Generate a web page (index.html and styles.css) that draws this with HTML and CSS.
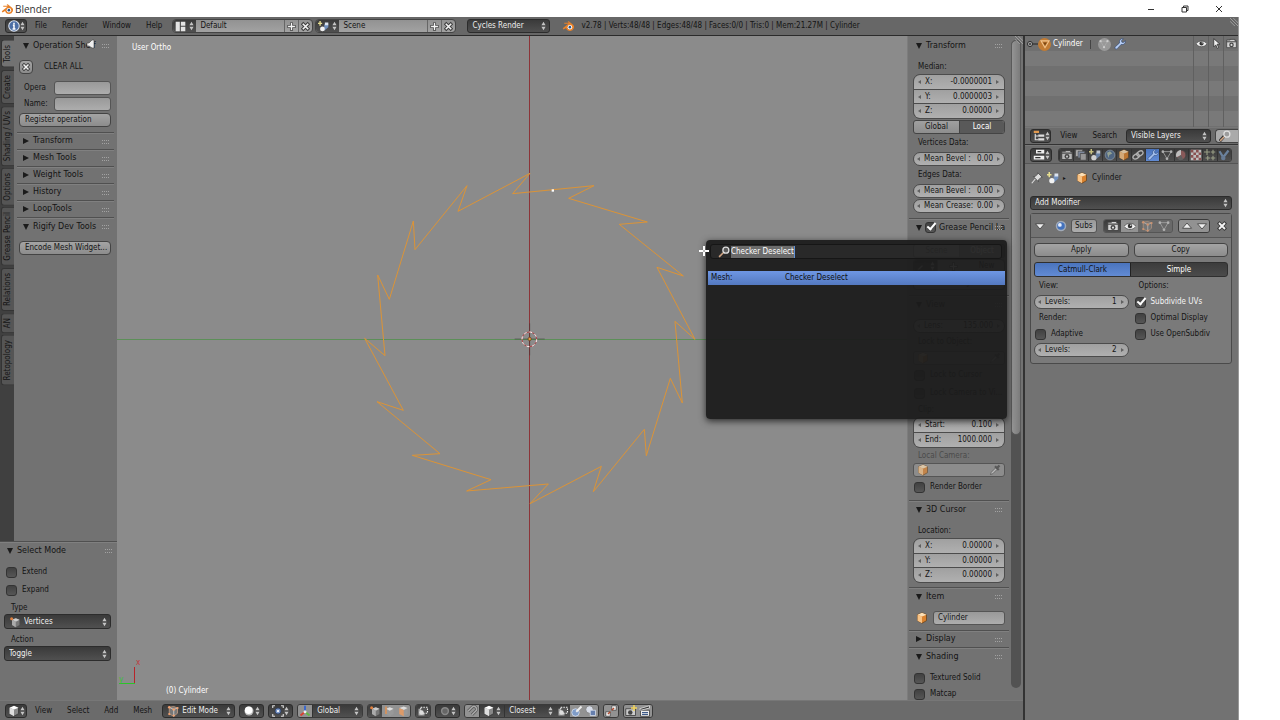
FILE: index.html
```html
<!DOCTYPE html>
<html lang="en">
<head>
<meta charset="utf-8">
<title>Blender</title>
<link rel="stylesheet" href="styles.css">
</head>
<body>
<svg class="defs" aria-hidden="true">
  <symbol id="ud" viewBox="0 0 6 12"><path d="M3 1 5.500 5H.5zM3 11 .5 7h5z" fill="#c4c4c4"/></symbol>
  <symbol id="blender" viewBox="0 0 16 16"><path d="M1 11 8.500 5H3V3.500h6L7.500 2 9 1.500l5 4a5 5 0 0 1-3 9c-3 0-5-1.500-5.500-4L2 12.500z" fill="#e8822a"/><circle cx="10.500" cy="9.500" r="3" fill="#fff"/><circle cx="10.500" cy="9.500" r="1.700" fill="#28568e"/></symbol>
  <symbol id="info" viewBox="0 0 16 16"><circle cx="8" cy="8" r="7" fill="#4c6ea5" stroke="#dde4f0" stroke-width="1.400"/><path d="M8 3.500v2M6.500 7H8v5M6 12h4" stroke="#fff" stroke-width="2" fill="none"/></symbol>
  <symbol id="layout" viewBox="0 0 16 16"><path d="M1 1h6v14H1zM8.500 1H15v6H8.500zM8.500 8.500H15V15H8.500z" fill="#e4e4e4"/></symbol>
  <symbol id="scene" viewBox="0 0 16 16"><path d="M3 0v7M0 3.500h6" stroke="#e8df90" stroke-width="2"/><path d="M9 5h6v4l-6 5z" fill="#7190bd"/><circle cx="6.500" cy="11.500" r="3.500" fill="#f2f2f2"/><path d="M10 2h5v4h-5z" fill="#dce4f0"/></symbol>
  <symbol id="plus" viewBox="0 0 16 16"><path d="M8 2v12M2 8h12" stroke="#444" stroke-width="4.500"/><path d="M8 3v10M3 8h10" stroke="#f4f4f4" stroke-width="2"/></symbol>
  <symbol id="x" viewBox="0 0 16 16"><path d="M3 3l10 10M13 3 3 13" stroke="#3b3b3b" stroke-width="5"/><path d="M4 4l8 8M12 4l-8 8" stroke="#f4f4f4" stroke-width="2.400"/></symbol>
  <symbol id="cube" viewBox="0 0 16 16"><path d="M8 1l6 2.500v8L8 15l-6-3.500v-8z" fill="#d9822f" stroke="#60401f"/><path d="M8 1l6 2.500L8 6 2 3.500z" fill="#fbe0b8"/><path d="M2 3.500 8 6v9l-6-3.500z" fill="#f8c386"/></symbol>
  <symbol id="wcube" viewBox="0 0 16 16"><path d="M8 1l6 2.500v8L8 15l-6-3.500v-8z" fill="#888" stroke="#333"/><path d="M8 1l6 2.500L8 6 2 3.500z" fill="#fff"/><path d="M2 3.500 8 6v9l-6-3.500z" fill="#ddd"/></symbol>
  <symbol id="vert" viewBox="0 0 16 16"><path d="M9 3l5 2v7l-5 3-5-3V5z" fill="#777"/><path d="M9 3l5 2-5 2.500L4 5z" fill="#ccc"/><path d="M4 5l5 2.500V15l-5-3z" fill="#aaa"/><circle cx="3.500" cy="3.500" r="2" fill="#e08040"/></symbol>
  <symbol id="edge" viewBox="0 0 16 16"><path d="M9 3l5 2v7l-5 3-5-3V5z" fill="#999"/><path d="M9 3l5 2-5 2.500L4 5z" fill="#ddd"/><path d="M4 2v10" stroke="#e09050" stroke-width="2"/></symbol>
  <symbol id="face" viewBox="0 0 16 16"><path d="M9 2l5 2v8l-5 3-6-3V4z" fill="#999"/><path d="M9 2l5 2-5 2.500L3 4z" fill="#ddd"/><path d="M3 4l6 2.500V15l-6-3z" fill="#dd9a68"/></symbol>
  <symbol id="editmode" viewBox="0 0 16 16"><path d="M3 3l6-1 5 2v7l-5 4-6-3z" fill="#777" stroke="#c9a286"/><path d="M3 3l6 3 5-2M9 6v9" stroke="#ddd" fill="none"/><g fill="#f0a070"><circle cx="3" cy="3" r="1.700"/><circle cx="9" cy="6" r="1.700"/><circle cx="14" cy="4" r="1.500"/><circle cx="3" cy="12" r="1.500"/><circle cx="9" cy="14" r="1.500"/></g></symbol>
  <symbol id="ball" viewBox="0 0 16 16"><circle cx="8" cy="8" r="6" fill="#bbb"/><circle cx="7.500" cy="7" r="5" fill="#fff"/></symbol>
  <symbol id="pivot" viewBox="0 0 16 16"><path d="M1 4V1h3M12 1h3v3M15 12v3h-3M4 15H1v-3" stroke="#ddd" stroke-width="1.500" fill="none"/><circle cx="8" cy="8" r="4" fill="#7894c4" stroke="#26375a"/><circle cx="8" cy="8" r="1.500" fill="#fff"/></symbol>
  <symbol id="axes" viewBox="0 0 16 16"><path d="M8 9V1" stroke="#3766d0" stroke-width="2.500"/><path d="M8 9l-6 5" stroke="#d84030" stroke-width="2.500"/><path d="M8 9l6 5" stroke="#60b840" stroke-width="2.500"/><circle cx="8" cy="9" r="2" fill="#eee"/></symbol>
  <symbol id="occl" viewBox="0 0 16 16"><path d="M2 5h8v9H2z" fill="#aaa"/><path d="M5 3h9v8H5z" fill="#555" stroke="#eee" stroke-dasharray="2 1.500" stroke-width="1.500"/><circle cx="6" cy="10" r="3" fill="#ddd"/></symbol>
  <symbol id="ring" viewBox="0 0 16 16"><circle cx="8" cy="8" r="4.500" fill="#666" stroke="#888" stroke-width="2"/></symbol>
  <symbol id="magnet" viewBox="0 0 16 16"><path d="M3 8l5-5a3.500 3.500 0 0 1 5 5l-5 5" stroke="#555" stroke-width="4" fill="none"/><path d="M3 8l5-5a3.500 3.500 0 0 1 5 5l-5 5" stroke="#aaa" stroke-width="2" fill="none"/></symbol>
  <symbol id="snapball" viewBox="0 0 16 16"><circle cx="6" cy="10" r="5" fill="#7f9cc8" stroke="#dde4f0"/><path d="M7 9l7-7" stroke="#eee" stroke-width="2.500"/></symbol>
  <symbol id="snapproj" viewBox="0 0 16 16"><circle cx="6" cy="6" r="5" fill="#d8dde8" stroke="#777"/><path d="M7 7h7v7H7z" fill="#667fae" stroke="#dce4f0"/></symbol>
  <symbol id="automerge" viewBox="0 0 16 16"><path d="M9 1h6v6H9zM1 9h6v6H1z" fill="#eee" stroke="#444"/><path d="M9 7l3-3M7 9l-3 3" stroke="#b04a30" stroke-width="2"/></symbol>
  <symbol id="camera" viewBox="0 0 16 16"><path d="M1 3h5V2h7v2h2v10H1z" fill="#d4d4d4" stroke="#333"/><path d="M1 5.500h14" stroke="#444" stroke-width="1.500"/><circle cx="8" cy="10" r="3.300" fill="#444"/><circle cx="8" cy="10" r="1.500" fill="#ddd"/></symbol>
  <symbol id="camlight" viewBox="0 0 16 16"><path d="M1 5h13v9H1z" fill="#ccc" stroke="#333"/><circle cx="7" cy="10" r="3" fill="#444"/><path d="M12 0v8M8 4h8" stroke="#f2d45c" stroke-width="2"/></symbol>
  <symbol id="clap" viewBox="0 0 16 16"><path d="M2 7h12v8H2z" fill="#eee" stroke="#333"/><path d="M1 5l13-4v3L2 7z" fill="#333" stroke="#eee"/><path d="M4 10h8M4 12.500h8" stroke="#3d5a88" stroke-width="1.500"/></symbol>
  <symbol id="stack" viewBox="0 0 16 16"><path d="M1 1h9v9H1z" fill="#ddd" stroke="#555"/><path d="M4 3h9v9H4z" fill="#8e9cb5" stroke="#555"/><path d="M7 6h8v9H7z" fill="#aaa" stroke="#444"/></symbol>
  <symbol id="world" viewBox="0 0 16 16"><circle cx="8" cy="8" r="6.500" fill="#536f92" stroke="#9aabbd"/><path d="M4 5l4-2 3 3-4 2-1 4z" fill="#a9b9a6"/></symbol>
  <symbol id="link" viewBox="0 0 16 16"><g fill="none" stroke="#ccc" stroke-width="1.800"><ellipse cx="5.500" cy="10" rx="4.500" ry="3" transform="rotate(-30 5.500 10)"/><ellipse cx="10.500" cy="6" rx="4.500" ry="3" transform="rotate(-30 10.500 6)"/></g></symbol>
  <symbol id="wrench" viewBox="0 0 16 16"><path d="M1.500 12 7.500 6.500C6.500 3 9 .5 12.500 1L10 3.500 10.500 5.500 12.500 6 15 3.500C15.500 7 13 9.500 9.500 8.500L4 14.500A1.800 1.800 0 0 1 1.500 12z" fill="#b9d0f6" stroke="#27406b" stroke-width=".8"/></symbol>
  <symbol id="tri" viewBox="0 0 16 16"><path d="M2.500 3.500h11L8 13z" fill="none" stroke="#aaa" stroke-width="1.300"/><g fill="#ccc"><circle cx="2.500" cy="3.500" r="1.800"/><circle cx="13.500" cy="3.500" r="1.800"/><circle cx="8" cy="13" r="1.800"/></g></symbol>
  <symbol id="mesh" viewBox="0 0 16 16"><path d="M1.500 3h13L8 14z" fill="none" stroke="#f2c48c" stroke-width="1.700"/><path d="M5 5.500h6L8 10.500z" fill="#7a4613"/></symbol>
  <symbol id="mat" viewBox="0 0 16 16"><circle cx="8" cy="8" r="6.500" fill="#9a6060" stroke="#444"/><path d="M8 1.500A6.500 6.500 0 0 0 2 11l6-3z" fill="#ddd"/><path d="M8 8l-5 4a6 6 0 0 0 8 2z" fill="#666"/></symbol>
  <symbol id="check" viewBox="0 0 16 16"><path d="M1 1h14v14H1z" fill="#ddd"/><path d="M1 1h3.500v3.500H1zM8 1h3.500v3.500H8zM4.500 4.500H8V8H4.500zM11.500 4.500H15V8h-3.500zM1 8h3.500v3.500H1zM8 8h3.500v3.500H8zM4.500 11.500H8V15H4.500zM11.500 11.500H15V15h-3.500z" fill="#9d5656"/></symbol>
  <symbol id="parts" viewBox="0 0 16 16"><path d="M4 0v8M0 4h8M12 1v6M9 4h6M5 9v6M2 12h6M12 9v6M9 12h6" stroke="#aeb496" stroke-width="1.500"/></symbol>
  <symbol id="phys" viewBox="0 0 16 16"><path d="M2 3l5 8 7-9" stroke="#7592b5" stroke-width="3" fill="none"/><circle cx="7" cy="12" r="3" fill="#6e87a8"/></symbol>
  <symbol id="tree" viewBox="0 0 16 16"><path d="M1 1h7v3H1z" fill="#e0994f"/><path d="M3 5v8h4M3 8h4" stroke="#ddd" stroke-width="1.500" fill="none"/><path d="M7 6h8v3H7zM7 11h8v3H7z" fill="#ddd"/></symbol>
  <symbol id="props" viewBox="0 0 16 16"><path d="M4 1h11v5H4zM1 9h14v5H1z" fill="#f0f0f0"/><path d="M6 3.500h5M3 11.500h7" stroke="#333" stroke-width="1.500"/></symbol>
  <symbol id="pin" viewBox="0 0 16 16"><path d="M1 15l5-6" stroke="#ddd" stroke-width="1.500"/><path d="M9 1l6 6-2 .5-3 3V13L3 6h2.500l3-3z" fill="#ddd" stroke="#444"/></symbol>
  <symbol id="eye" viewBox="0 0 16 16"><path d="M0 8.500C4 3 12 3 16 8.500 12 14 4 14 0 8.500z" fill="#f0f0f0" stroke="#444"/><circle cx="8" cy="8" r="3" fill="#333"/><circle cx="9" cy="7" r="1" fill="#eee"/></symbol>
  <symbol id="arrow" viewBox="0 0 16 16"><path d="M4 1v12l3-3 2 5 2-1-2-5h4z" fill="#f0f0f0" stroke="#222"/></symbol>
  <symbol id="mag" viewBox="0 0 16 16"><path d="M1 15l6-7" stroke="#333" stroke-width="4"/><path d="M1.500 14.500 7 9" stroke="#d2a583" stroke-width="2"/><circle cx="10.500" cy="5.500" r="4" fill="#8b8b8b" fill-opacity=".5" stroke="#e0e0e0" stroke-width="1.700"/></symbol>
  <symbol id="subs" viewBox="0 0 16 16"><circle cx="8" cy="8" r="7" fill="#c7d7ee" opacity=".55"/><circle cx="8" cy="8" r="5" fill="#4372bd"/><circle cx="6.500" cy="6.500" r="2.500" fill="#e6efff"/></symbol>
  <symbol id="up" viewBox="0 0 16 16"><path d="M8 4l6 7H2z" fill="#eee" stroke="#333"/></symbol>
  <symbol id="down" viewBox="0 0 16 16"><path d="M8 12 2 5h12z" fill="#eee" stroke="#333"/></symbol>
  <symbol id="drop" viewBox="0 0 16 16"><path d="M2 14l1-3 6-6 2 2-6 6z" fill="#ccc" stroke="#444"/><path d="M8 3l5 5M11 5l3-3" stroke="#444" stroke-width="3"/></symbol>
  <symbol id="grip" viewBox="0 0 10 6"><path d="M1 1.500h8M1 4.500h8" stroke="#a2a2a2" stroke-dasharray="1 1"/></symbol>
  <symbol id="corner" viewBox="0 0 10 10"><path d="M0 0l10 10M4 0l6 6M0 4l6 6" stroke="#aaa"/></symbol>
</svg>

<header class="titlebar">
  <svg class="i"><use href="#blender"/></svg><span>Blender</span>
  <div class="winbtns">
    <button aria-label="Minimize"><svg viewBox="0 0 8 8"><path d="M1 4.500h6"/></svg></button>
    <button aria-label="Restore"><svg viewBox="0 0 8 8"><path d="M1 2.500h4.500V7H1zM2.500 2.500V1H7v4.500H5.500"/></svg></button>
    <button aria-label="Close"><svg viewBox="0 0 8 8"><path d="M1 1l6 6M7 1 1 7"/></svg></button>
  </div>
</header>

<div class="app">
<nav class="info">
  <button class="dd" aria-label="Editor type"><svg class="i"><use href="#info"/></svg><svg class="ud"><use href="#ud"/></svg></button>
  <div class="menus"><button>File</button><button>Render</button><button>Window</button><button>Help</button></div>
  <div class="block">
    <button class="dd" aria-label="Screen layout"><svg class="i"><use href="#layout"/></svg><svg class="ud"><use href="#ud"/></svg></button>
    <input aria-label="Layout name" value="Default">
    <button aria-label="Add layout"><svg class="i"><use href="#plus"/></svg></button><button aria-label="Delete layout"><svg class="i"><use href="#x"/></svg></button>
  </div>
  <div class="block">
    <button class="dd" aria-label="Scene"><svg class="i"><use href="#scene"/></svg><svg class="ud"><use href="#ud"/></svg></button>
    <input aria-label="Scene name" value="Scene">
    <button aria-label="Add scene"><svg class="i"><use href="#plus"/></svg></button><button aria-label="Delete scene"><svg class="i"><use href="#x"/></svg></button>
  </div>
  <span class="sel engine"><select aria-label="Render engine"><option>Cycles Render</option></select><svg class="ud"><use href="#ud"/></svg></span>
  <svg class="i logo"><use href="#blender"/></svg>
  <span class="stats">v2.78 | Verts:48/48 | Edges:48/48 | Faces:0/0 | Tris:0 | Mem:21.27M | Cylinder</span>
  <svg class="corner infomark"><use href="#corner"/></svg>
</nav>

<main class="work">
<section class="view3d">
  <div class="regions">
    <aside class="left">
      <div class="tools">
        <div class="tabs"><button class="on">Tools</button><button>Create</button><button>Shading / UVs</button><button>Options</button><button>Grease Pencil</button><button>Relations</button><button>AN</button><button>Retopology</button></div>
        <div class="panels">
          <section class="panel shelf"><h2 class="open">Operation Shelf<svg class="grip"><use href="#grip"/></svg></h2>
            <div class="body">
              <div class="line clear"><button class="btn sq" aria-label="Clear"><svg class="i"><use href="#x"/></svg></button><span>CLEAR ALL</span></div>
              <label class="line field"><span>Opera</span><input class="text"></label>
              <label class="line field"><span>Name:</span><input class="text"></label>
              <button class="btn start">Register operation</button>
            </div></section>
          <section class="panel"><h2>Transform<svg class="grip"><use href="#grip"/></svg></h2></section>
          <section class="panel"><h2>Mesh Tools<svg class="grip"><use href="#grip"/></svg></h2></section>
          <section class="panel"><h2>Weight Tools<svg class="grip"><use href="#grip"/></svg></h2></section>
          <section class="panel"><h2>History<svg class="grip"><use href="#grip"/></svg></h2></section>
          <section class="panel"><h2>LoopTools<svg class="grip"><use href="#grip"/></svg></h2></section>
          <section class="panel"><h2 class="open">Rigify Dev Tools<svg class="grip"><use href="#grip"/></svg></h2>
            <div class="body"><button class="btn start">Encode Mesh Widget...</button></div></section>
        </div>
      </div>
      <section class="panel operator"><h2 class="open">Select Mode<svg class="grip"><use href="#grip"/></svg></h2>
        <div class="body">
          <label class="cb"><input type="checkbox">Extend</label>
          <label class="cb"><input type="checkbox">Expand</label>
          <label class="lab" for="type">Type</label>
          <span class="sel"><svg class="i"><use href="#vert"/></svg><select id="type"><option>Vertices</option></select><svg class="ud"><use href="#ud"/></svg></span>
          <label class="lab" for="action">Action</label>
          <span class="sel"><select id="action"><option>Toggle</option></select><svg class="ud"><use href="#ud"/></svg></span>
        </div></section>
    </aside>

    <div class="viewport">
      <svg class="canvas">
        <path d="M0 303.500H2000" stroke="#5c8f58"/><path d="M412.500 0V2000" stroke="#8c3438"/>
        <g transform="translate(233 124) scale(.333333)">
          <path d="M540 40 488 101 732 77 656 115 892 186 808 193 1000 348 921 322 1035 538 975 484 997 729 961 655 889 887 883 808 730 995 754 919 540 1031 595 972 350 993 423 959 187 886 270 881 81 725 160 751 44 535 105 587 83 345 118 418 190 183 195 269 351 77 324 154z" fill="none" stroke="#dc9436" stroke-width="3"/>
          <path d="M605 88h7v7h-7z" fill="#fff"/>
          <path d="M494 537h90M539 490v96" stroke="#333" stroke-width="2" opacity=".7"/>
          <circle cx="538" cy="538" r="22" fill="none" stroke="#b34346" stroke-width="3"/>
          <circle cx="538" cy="538" r="22" fill="none" stroke="#fff" stroke-width="3" stroke-dasharray="8.600 8.600"/>
          <circle cx="539" cy="537" r="5" fill="#e79a3b" stroke="#5a3a1a" stroke-width="2"/>
        </g>
        <path d="M17.500 631v16" stroke="#b8242a"/><path d="M2 647.500h16" stroke="#2bc428"/>
        <text x="19" y="629" fill="#c03a3e">x</text><text x="2" y="646" fill="#36c034">y</text>
      </svg>
      <span class="ortho">User Ortho</span><span class="objname">(0) Cylinder</span>
    </div>

    <aside class="npanel">
      <div class="scroll">
      <section class="panel"><h2 class="open">Transform<svg class="grip"><use href="#grip"/></svg></h2>
        <div class="body">
          <span class="lab">Median:</span>
          <div class="group"><label class="num">X:<input value="-0.0000001"></label><label class="num">Y:<input value="0.0000003"></label><label class="num">Z:<input value="0.00000"></label></div>
          <div class="toggle light"><button>Global</button><button class="on">Local</button></div>
          <span class="lab">Vertices Data:</span>
          <label class="num">Mean Bevel :<input value="0.00"></label>
          <span class="lab">Edges Data:</span>
          <label class="num">Mean Bevel :<input value="0.00"></label>
          <label class="num">Mean Crease:<input value="0.00"></label>
        </div></section>
      <section class="panel grease"><h2 class="open"><input type="checkbox" checked aria-label="Grease Pencil Layers">Grease Pencil La<svg class="grip"><use href="#grip"/></svg></h2>
        <div class="body">
          <div class="toggle light"><button>Scene</button><button class="on">Object</button></div>
          <div class="block"><button class="dd" aria-label="Grease pencil data"><svg class="i"><use href="#drop"/></svg><svg class="ud"><use href="#ud"/></svg></button><button class="new"><svg class="i"><use href="#plus"/></svg>New</button></div>
          <button class="btn">New Layer</button>
        </div></section>
      <section class="panel"><h2 class="open">View<svg class="grip"><use href="#grip"/></svg></h2>
        <div class="body">
          <label class="num">Lens:<input value="135.000"></label>
          <label class="lab" for="lockobj">Lock to Object:</label>
          <span class="obj faded"><svg class="i"><use href="#cube"/></svg><input id="lockobj"><svg class="i"><use href="#drop"/></svg></span>
          <label class="cb"><input type="checkbox">Lock to Cursor</label>
          <label class="cb"><input type="checkbox">Lock Camera to Vi...</label>
          <span class="lab">Clip:</span>
          <div class="group"><label class="num">Start:<input value="0.100"></label><label class="num">End:<input value="1000.000"></label></div>
          <label class="lab dim" for="loccam">Local Camera:</label>
          <span class="obj faded"><svg class="i"><use href="#cube"/></svg><input id="loccam"><svg class="i"><use href="#drop"/></svg></span>
          <label class="cb"><input type="checkbox">Render Border</label>
        </div></section>
      <section class="panel"><h2 class="open">3D Cursor<svg class="grip"><use href="#grip"/></svg></h2>
        <div class="body">
          <span class="lab">Location:</span>
          <div class="group"><label class="num">X:<input value="0.00000"></label><label class="num">Y:<input value="0.00000"></label><label class="num">Z:<input value="0.00000"></label></div>
        </div></section>
      <section class="panel"><h2 class="open">Item<svg class="grip"><use href="#grip"/></svg></h2>
        <div class="body"><div class="line item"><svg class="i"><use href="#cube"/></svg><input class="text" aria-label="Object name" value="Cylinder"></div></div></section>
      <section class="panel"><h2>Display<svg class="grip"><use href="#grip"/></svg></h2></section>
      <section class="panel shading"><h2 class="open">Shading<svg class="grip"><use href="#grip"/></svg></h2>
        <div class="body"><label class="cb"><input type="checkbox">Textured Solid</label><label class="cb"><input type="checkbox">Matcap</label></div></section>
      </div>
      <div class="bar"><i></i></div>
    </aside>
    <svg class="corner top"><use href="#corner"/></svg>
  </div>

  <nav class="viewhead">
    <button class="dd" aria-label="Editor type"><svg class="i"><use href="#wcube"/></svg><svg class="ud"><use href="#ud"/></svg></button>
    <div class="menus"><button>View</button><button>Select</button><button>Add</button><button>Mesh</button></div>
    <span class="sel mode"><svg class="i"><use href="#editmode"/></svg><select aria-label="Mode"><option>Edit Mode</option></select><svg class="ud"><use href="#ud"/></svg></span>
    <button class="dd wide" aria-label="Viewport shading"><svg class="i"><use href="#ball"/></svg><svg class="ud"><use href="#ud"/></svg></button>
    <button class="dd wide" aria-label="Pivot point"><svg class="i"><use href="#pivot"/></svg><svg class="ud"><use href="#ud"/></svg></button>
    <div class="strip"><button class="on" aria-label="Manipulator"><svg class="i"><use href="#axes"/></svg></button><span class="sel orient"><select aria-label="Orientation"><option>Global</option></select><svg class="ud"><use href="#ud"/></svg></span></div>
    <div class="strip"><button aria-label="Vertex select"><svg class="i"><use href="#vert"/></svg></button><button class="on" aria-label="Edge select"><svg class="i"><use href="#edge"/></svg></button><button class="on" aria-label="Face select"><svg class="i"><use href="#face"/></svg></button></div>
    <div class="strip"><button aria-label="Limit selection"><svg class="i"><use href="#occl"/></svg></button></div>
    <button class="dd wide" aria-label="Proportional editing"><svg class="i"><use href="#ring"/></svg><svg class="ud"><use href="#ud"/></svg></button>
    <div class="strip snap"><button class="on" aria-label="Snap"><svg class="i"><use href="#magnet"/></svg></button><button class="dd wide" aria-label="Snap element"><svg class="i"><use href="#wcube"/></svg><svg class="ud"><use href="#ud"/></svg></button><span class="sel orient"><select aria-label="Snap target"><option>Closest</option></select><svg class="ud"><use href="#ud"/></svg></span><button aria-label="Snap self"><svg class="i"><use href="#occl"/></svg></button><button class="on" aria-label="Align rotation"><svg class="i"><use href="#snapball"/></svg></button><button class="on" aria-label="Project"><svg class="i"><use href="#snapproj"/></svg></button></div>
    <div class="strip"><button class="on" aria-label="Auto merge"><svg class="i"><use href="#automerge"/></svg></button></div>
    <div class="strip"><button class="on" aria-label="Render image"><svg class="i"><use href="#camlight"/></svg></button><button class="on" aria-label="Render animation"><svg class="i"><use href="#clap"/></svg></button></div>
  </nav>

  <svg class="crosshair" viewBox="0 0 12 12"><path d="M6 1v10M1 6h10" stroke="#fff" stroke-width="2"/><path d="M6 5v2" stroke="#777"/></svg>
  <svg class="shelfmark" viewBox="0 0 10 10"><path d="M1 4h2l3-3h2v8H6L3 7H1z" fill="#eee" stroke="#444" stroke-width=".6"/></svg>
  <div class="popup" role="dialog" aria-label="Search">
    <div class="query"><svg class="i"><use href="#mag"/></svg><input aria-label="Search" value="Checker Deselect"></div>
    <button class="hit"><span>Mesh:</span><span>Checker Deselect</span></button>
  </div>
</section>

<section class="side">
  <div class="outliner">
    <div class="node"><svg class="expand" viewBox="0 0 12 8"><circle cx="4" cy="4" r="2.500" fill="#ddd" stroke="#222"/><path d="M2.500 4h3M4 2.500v3M7 4h5" stroke="#222"/></svg>
      <span class="disc orange"><svg class="i"><use href="#mesh"/></svg></span><span class="name">Cylinder</span><span class="pipe"></span>
      <span class="disc"><svg class="i"><use href="#tri"/></svg></span><svg class="i"><use href="#wrench"/></svg></div>
    <div class="cols"><span><svg class="i"><use href="#eye"/></svg></span><span><svg class="i"><use href="#arrow"/></svg></span><span><svg class="i"><use href="#camera"/></svg></span></div>
  </div>
  <nav class="outhead">
    <button class="dd" aria-label="Editor type"><svg class="i"><use href="#tree"/></svg><svg class="ud"><use href="#ud"/></svg></button>
    <div class="menus"><button>View</button><button>Search</button></div>
    <span class="sel"><select aria-label="Display mode"><option>Visible Layers</option></select><svg class="ud"><use href="#ud"/></svg></span>
    <button class="find" aria-label="Search"><svg class="i"><use href="#mag"/></svg></button>
  </nav>
  <nav class="prophead">
    <button class="dd" aria-label="Editor type"><svg class="i"><use href="#props"/></svg><svg class="ud"><use href="#ud"/></svg></button>
    <div class="strip contexts">
      <button aria-label="Render"><svg class="i"><use href="#camera"/></svg></button><button aria-label="Render layers"><svg class="i"><use href="#stack"/></svg></button><button aria-label="Scene"><svg class="i"><use href="#scene"/></svg></button><button aria-label="World"><svg class="i"><use href="#world"/></svg></button><button aria-label="Object"><svg class="i"><use href="#cube"/></svg></button><button aria-label="Constraints"><svg class="i"><use href="#link"/></svg></button><button class="blue" aria-label="Modifiers"><svg class="i"><use href="#wrench"/></svg></button><button aria-label="Data"><svg class="i"><use href="#tri"/></svg></button><button aria-label="Material"><svg class="i"><use href="#mat"/></svg></button><button aria-label="Texture"><svg class="i"><use href="#check"/></svg></button><button aria-label="Particles"><svg class="i"><use href="#parts"/></svg></button><button aria-label="Physics"><svg class="i"><use href="#phys"/></svg></button>
    </div>
  </nav>
  <div class="properties">
    <div class="crumbs"><svg class="i"><use href="#pin"/></svg><svg class="i"><use href="#scene"/></svg><span class="sep">▸</span><svg class="i"><use href="#cube"/></svg><span>Cylinder</span></div>
    <span class="sel"><select aria-label="Add Modifier"><option>Add Modifier</option></select><svg class="ud"><use href="#ud"/></svg></span>
    <section class="modifier">
      <header>
        <button class="bare" aria-label="Collapse"><svg class="i"><use href="#down"/></svg></button>
        <svg class="i subs"><use href="#subs"/></svg>
        <input class="text" aria-label="Modifier name" value="Subs">
        <div class="strip flags"><button aria-label="Render"><svg class="i"><use href="#camera"/></svg></button><button class="on" aria-label="Viewport"><svg class="i"><use href="#eye"/></svg></button><button class="off" aria-label="Edit mode"><svg class="i"><use href="#editmode"/></svg></button><button class="off" aria-label="On cage"><svg class="i"><use href="#tri"/></svg></button></div>
        <div class="strip moves"><button class="on" aria-label="Move up"><svg class="i"><use href="#up"/></svg></button><button class="on" aria-label="Move down"><svg class="i"><use href="#down"/></svg></button></div>
        <button class="bare close" aria-label="Remove"><svg class="i"><use href="#x"/></svg></button>
      </header>
      <div class="mbody">
        <div class="pair"><button class="btn">Apply</button><button class="btn">Copy</button></div>
        <div class="toggle"><button class="blue">Catmull-Clark</button><button>Simple</button></div>
        <div class="pair">
          <div><span class="lab">View:</span><label class="num">Levels:<input value="1"></label><span class="lab">Render:</span><label class="cb"><input type="checkbox">Adaptive</label><label class="num">Levels:<input value="2"></label></div>
          <div><span class="lab">Options:</span><label class="cb lit"><input type="checkbox" checked>Subdivide UVs</label><label class="cb"><input type="checkbox">Optimal Display</label><label class="cb"><input type="checkbox">Use OpenSubdiv</label></div>
        </div>
      </div>
    </section>
  </div>
</section>
</main>
</div>
</body>
</html>
```

FILE: styles.css
```css
* { box-sizing: border-box; }
html, body { height: 100%; }
body {
  margin: 0;
  display: flex;
  flex-direction: column;
  background: #fff;
  color: #141414;
  font: 8px/14px "DejaVu Sans Condensed", "DejaVu Sans", sans-serif;
  overflow: hidden;
}
button, input, select { font: inherit; color: inherit; margin: 0; padding: 0; border: 0; background: none; min-width: 0; }
select { appearance: none; flex: 1; }
svg { flex: none; display: block; }
.defs { position: absolute; width: 0; height: 0; }
.i { width: 12px; height: 12px; }
.ud { width: 5px; height: 10px; }

/* window title */
.titlebar { flex: none; display: flex; align-items: center; gap: 2px; height: 17px; margin-right: 41px; padding: 0 3px 0 1px; font: 10px/16px "Open Sans", sans-serif; color: #333; }
.winbtns { display: flex; margin-left: auto; }
.winbtns button { width: 34px; display: grid; place-items: center; }
.winbtns svg { width: 8px; height: 8px; fill: none; stroke: #333; stroke-width: 1; }

.app { flex: 1; min-height: 0; display: flex; flex-direction: column; margin-right: 41px; background: #727272; border-right: 1px solid #999; }
.work { flex: 1; min-height: 0; display: grid; grid-template-columns: 1fr 215px; }

/* shared controls */
.dd, .sel, .strip button {
  display: flex; align-items: center; height: 14px;
  background: linear-gradient(#3a3a3a, #505050);
  color: #eee;
}
.dd, .sel { border: 1px solid #2c2c2c; border-radius: 3px; }
.dd { width: 22px; justify-content: space-between; padding: 0 2px; }
.dd.wide { width: 25px; padding: 0 3px; }
.sel { padding: 0 3px 0 4px; gap: 3px; }
.btn { display: block; width: 100%; height: 14px; margin: 1px 0; line-height: 12px; border: 1px solid #444; border-radius: 4px; background: linear-gradient(#a4a4a4, #8c8c8c); }
.btn.start { text-align: left; padding-left: 5px; white-space: nowrap; overflow: hidden; }
.btn.sq { width: 14px; display: grid; place-items: center; }
.btn.sq .i { width: 10px; height: 10px; }
.text { height: 14px; border: 1px solid #555; border-radius: 3px; background: linear-gradient(#999, #adadad); padding: 0 4px; }
.strip { display: flex; border-radius: 3px; overflow: hidden; border: 1px solid #3a3a3a; height: 14px; }
.strip button { width: 14px; height: 12px; justify-content: center; border: 0; }
.strip .on { background: #929292; }
.strip .sel, .strip .dd { height: 12px; border: 0; border-left: 1px solid #333; border-radius: 0; }
.strip .dd.wide { width: 25px; justify-content: space-between; }
.blue, .strip .blue { background: linear-gradient(#4a74bd, #628bd4); }
.block { display: flex; height: 14px; border: 1px solid #444; border-radius: 4px; overflow: hidden; background: linear-gradient(#929292, #a2a2a2); }
.block .dd { height: 12px; border: 0; border-radius: 0; width: 23px; }
.block input { width: 88px; padding-left: 4px; }
.block > button { width: 14px; display: flex; align-items: center; justify-content: center; border-left: 1px solid #666; }
.block .dd { justify-content: space-between; border: 0; }
.block .i { width: 11px; height: 11px; }
.menus { display: flex; gap: 15px; }

.lab { display: block; height: 16px; line-height: 16px; padding-left: 5px; white-space: nowrap; }
.lab.dim { height: 14px; color: #4b4b4b; }
.cb { display: flex; align-items: center; gap: 5px; height: 18px; padding-left: 1px; white-space: nowrap; }
.lit { color: #f4f4f4; }
input[type=checkbox] { appearance: none; flex: none; width: 11px; height: 11px; border: 1px solid #333; border-radius: 3px; background: linear-gradient(#414141, #565656); position: relative; }
input[type=checkbox]:checked::after { content: ""; position: absolute; left: 3px; top: -2px; width: 3px; height: 7px; border: solid #fff; border-width: 0 2px 2px 0; transform: rotate(40deg); }
.num { display: flex; align-items: center; height: 14px; margin: 1px 0; border: 1px solid #4c4c4c; border-radius: 7px; background: linear-gradient(#a0a0a0, #b0b0b0); white-space: nowrap; padding: 0 4px 0 3px; }
.num::before, .num::after { content: ""; border: solid transparent; border-width: 2px 3px; flex: none; width: 0; height: 0; }
.num::before { border-left-width: 0; border-right-color: #606060; margin-right: 4px; }
.num::after { border-right-width: 0; border-left-color: #606060; margin-left: 4px; }
.num input { flex: 1; width: 0; text-align: right; }
.group { border: 1px solid #4c4c4c; border-radius: 7px; overflow: hidden; background: #4c4c4c; display: grid; gap: 1px; margin-top: -1px; }
.group .num { height: 13px; margin: 0; border: 0; border-radius: 0; padding: 0 5px 0 4px; }
.group .num:first-child, .group .num:last-child { height: 14px; }
.toggle { display: grid; grid-template-columns: 1fr 1fr; height: 14px; margin: 1px 0; border: 1px solid #2f2f2f; border-radius: 3px; overflow: hidden; background: linear-gradient(#3c3c3c, #4b4b4b); color: #fff; }
.toggle button { line-height: 12px; }
.toggle .blue { color: #111; border-right: 1px solid #222; }
.toggle.light { background: linear-gradient(#a0a0a0, #8e8e8e); color: #141414; border-color: #444; }
.toggle.light .on { background: #595959; color: #fff; border-left: 1px solid #444; }
.obj { display: flex; align-items: center; justify-content: space-between; height: 14px; margin: 1px 0; padding: 0 3px; border: 1px solid #555; border-radius: 3px; background: #8c8c8c; }
.obj input { flex: 1; width: 0; }
.faded .i { opacity: .7; }
.line { display: flex; align-items: center; height: 16px; }

.panel { padding: 0 2px; border-top: 1px solid #505050; box-shadow: inset 0 1px #808080; }
.panel:first-child { border-top-color: transparent; box-shadow: none; }
.panel h2 { margin: 0; display: flex; align-items: center; height: 16px; font: 8px/16px "DejaVu Sans", sans-serif; padding-left: 8px; position: relative; white-space: nowrap; }
.panel h2.open { height: 17px; }
.panel h2::before { content: ""; border: solid transparent; border-width: 3px 0 3px 6px; border-left-color: #1b1b1b; margin-right: 4px; }
.panel h2.open::before { border-color: #1b1b1b transparent transparent; border-width: 6px 3px 0; }
.grip { position: absolute; right: 3px; top: 6px; width: 10px; height: 6px; }
.body { padding: 5px 2px 4px; }

/* info header */
.info { position: relative; flex: none; display: flex; align-items: center; height: 19px; padding-left: 5px; background: #676767; border-bottom: 1px solid #2b2b2b; }
.info .menus { margin: 0 10px 0 8px; }
.info .block { margin-right: 2px; }
.engine { width: 83px; margin-left: 9px; }
.logo { margin: 0 7px 0 12px; }
.stats { white-space: nowrap; }

/* 3D view */
.view3d { position: relative; min-width: 0; min-height: 0; display: flex; flex-direction: column; }
.regions { position: relative; flex: 1; min-height: 0; display: grid; grid-template-columns: 117px 1fr 116px; grid-template-rows: minmax(0, 1fr); }
.left { display: flex; flex-direction: column; min-height: 0; }
.tools { flex: 1; min-height: 0; display: flex; overflow: hidden; }
.tabs { width: 14px; flex: none; display: flex; flex-direction: column; gap: 2px; padding: 4px 0 0 1px; background: #404040; }
.tabs button { flex: none; writing-mode: vertical-rl; transform: rotate(180deg); line-height: 12px; padding: 4px 0; border: 1px solid #343434; border-left: 0; border-radius: 0 3px 3px 0; background: #555; }
.tabs .on { background: #727272; }
.panels { flex: 1; min-width: 0; padding: 0 3px; }
.panels .panel { padding: 0; }
.panels .panel h2 { padding-left: 6px; }
.panels .body { padding-left: 2px; padding-right: 3px; }
.clear { gap: 11px; margin-bottom: 5px; }
.field span { width: 35px; padding-left: 5px; }
.field .text { flex: 1; width: 0; }
.operator { height: 159px; }
.operator.panel h2 { padding-left: 5px; }
.operator h2 .grip { right: 1px; }
.operator .body { padding: 4px 4px; }
.operator .cb { padding-left: 0; }
.operator .lab { height: 15px; line-height: 17px; }
.operator .sel { height: 15px; margin: 0 0 2px -2px; }

.viewport { position: relative; background: #8b8b8b; overflow: hidden; }
.canvas { width: 100%; height: 100%; }
.canvas text { font-size: 8px; }
.ortho, .objname { position: absolute; color: #fff; }
.ortho { left: 15px; top: 5px; }
.objname { left: 49px; bottom: 2px; }

.npanel { display: flex; min-height: 0; overflow: hidden; border-left: 1px solid #7d7d7d; }
.scroll { flex: 1; min-width: 0; overflow: hidden; padding-left: 1px; }
.npanel .panel h2 { padding-left: 5px; }
.grease input[type=checkbox] { margin-right: 3px; }
.grease h2.open::before { margin-right: 3px; }
.npanel .grease .body { padding-top: 7px; }
.grease .block { margin: 1px 0 3px; }
.grease .block .new { flex: 1; gap: 20px; }
.item { gap: 5px; padding-left: 3px; }
.item .text { flex: 1; width: 0; }
.shading .cb { height: 16px; }
.bar { width: 10px; margin: 4px 2px 12px 2px; border-radius: 5px; background: #525252; }
.bar i { display: block; height: 61%; border-radius: 5px; border: 1px solid #5a5a5a; background: linear-gradient(90deg, #949494, #7b7b7b); }
.corner { position: absolute; width: 8px; height: 8px; }
.corner.top { right: 0; top: 0; }
.infomark { right: 0; top: 1px; }

.viewhead { flex: none; display: flex; align-items: center; height: 20px; padding: 0 5px; gap: 4px; background: #6b6b6b; border-top: 1px solid #777; }
.viewhead .menus { margin: 0 6px 0 4px; }
.mode { width: 73px; }
.sel.orient { width: 50px; }
.snap .sel.orient { width: 52px; }
.viewhead .i { width: 12px; height: 12px; }

.crosshair { position: absolute; left: 698px; top: 209px; width: 12px; height: 12px; z-index: 3; }
.shelfmark { position: absolute; left: 86px; top: 3px; width: 10px; height: 10px; }
.popup { position: absolute; z-index: 2; left: 706px; top: 204px; width: 301px; height: 179px; padding: 4px 2px; background: rgba(28, 28, 28, .94); border-radius: 4px; box-shadow: 0 2px 7px rgba(0, 0, 0, .7); }
.query { display: flex; align-items: center; gap: 1px; height: 15px; margin: 0 3px 12px 2px; padding-left: 7px; border: 1px solid #161616; border-radius: 3px; background: rgba(60, 60, 60, .3); color: #fff; }
.query input { field-sizing: content; height: 12px; background: #6c6c6c; border-right: 1px solid #5f8fd8; }
.hit { display: flex; width: 100%; height: 14px; padding-left: 3px; background: linear-gradient(#6e97e4, #5479c0); color: #0d0d0d; text-align: left; line-height: 14px; }
.hit span:first-child { width: 74px; }

/* outliner and properties */
.side { display: flex; flex-direction: column; min-height: 0; border-left: 2px solid #333; overflow: hidden; }
.outliner { flex: none; display: flex; justify-content: space-between; height: 91px; background: repeating-linear-gradient(#707070 0 15px, #797979 15px 30px); }
.node { display: flex; align-items: center; height: 16px; padding-left: 1px; }
.expand { width: 12px; height: 8px; }
.disc { width: 13px; height: 13px; border-radius: 50%; background: #999; display: grid; place-items: center; }
.disc .i { width: 10px; height: 10px; }
.orange { background: #c27c34; }
.name { color: #fff; padding: 0 7px 0 2px; }
.pipe { width: 1px; height: 9px; background: #444; margin-right: 7px; }
.node > .i { margin-left: 3px; }
.cols { display: flex; }
.cols span { width: 15px; padding: 2px; border-left: 1px solid #606060; }
.cols span .i { width: 11px; height: 11px; }
.outhead, .prophead { flex: none; display: flex; align-items: center; padding-left: 5px; height: 19px; background: #6b6b6b; border-bottom: 1px solid #333; border-top: 1px solid #777; }
.outhead { height: 18px; }
.outhead .menus { margin: 0 9px; }
.outhead .sel { width: 88px; }
.find { width: 24px; height: 14px; margin-left: 4px; padding-left: 3px; border: 1px solid #444; border-right: 0; border-radius: 4px 0 0 4px; background: #aaa; }
.prophead { gap: 6px; border-bottom-color: #555; }
.contexts { flex: 1; margin-right: 6px; }
.contexts button { flex: 1; width: 0; border-left: 1px solid #333; }
.contexts .i { width: 12px; height: 12px; opacity: .8; }
.properties { padding: 6px 6px 0 5px; }
.crumbs { display: flex; align-items: center; gap: 4px; height: 16px; padding-left: 1px; margin-bottom: 10px; }
.crumbs .sep { width: 9px; font-size: 6px; }
.modifier { margin-top: 3px; border: 1px solid #4a4a4a; border-radius: 3px; background: #7a7a7a; padding-bottom: 5px; }
.modifier header { display: flex; align-items: center; height: 24px; padding-left: 3px; border-bottom: 1px solid #555; background: #737373; }
.subs { margin: 0 4px 0 9px; }
.modifier .text { width: 26px; padding: 0 2px 0 3px; }
.flags { margin-left: 6px; border-color: #555; }
.strip.flags button { width: 17px; }
.flags .off { background: #666; opacity: .7; }
.moves { margin-left: 5px; }
.strip.moves button { width: 15px; }
.close { margin-left: 6px; }
.mbody { padding: 4px 3px 0; }
.mbody > .toggle { margin: 4px 0 1px; height: 15px; }
.pair { display: grid; grid-template-columns: 1fr 1fr; gap: 5px; }
.mbody .cb { height: 16px; }
```
